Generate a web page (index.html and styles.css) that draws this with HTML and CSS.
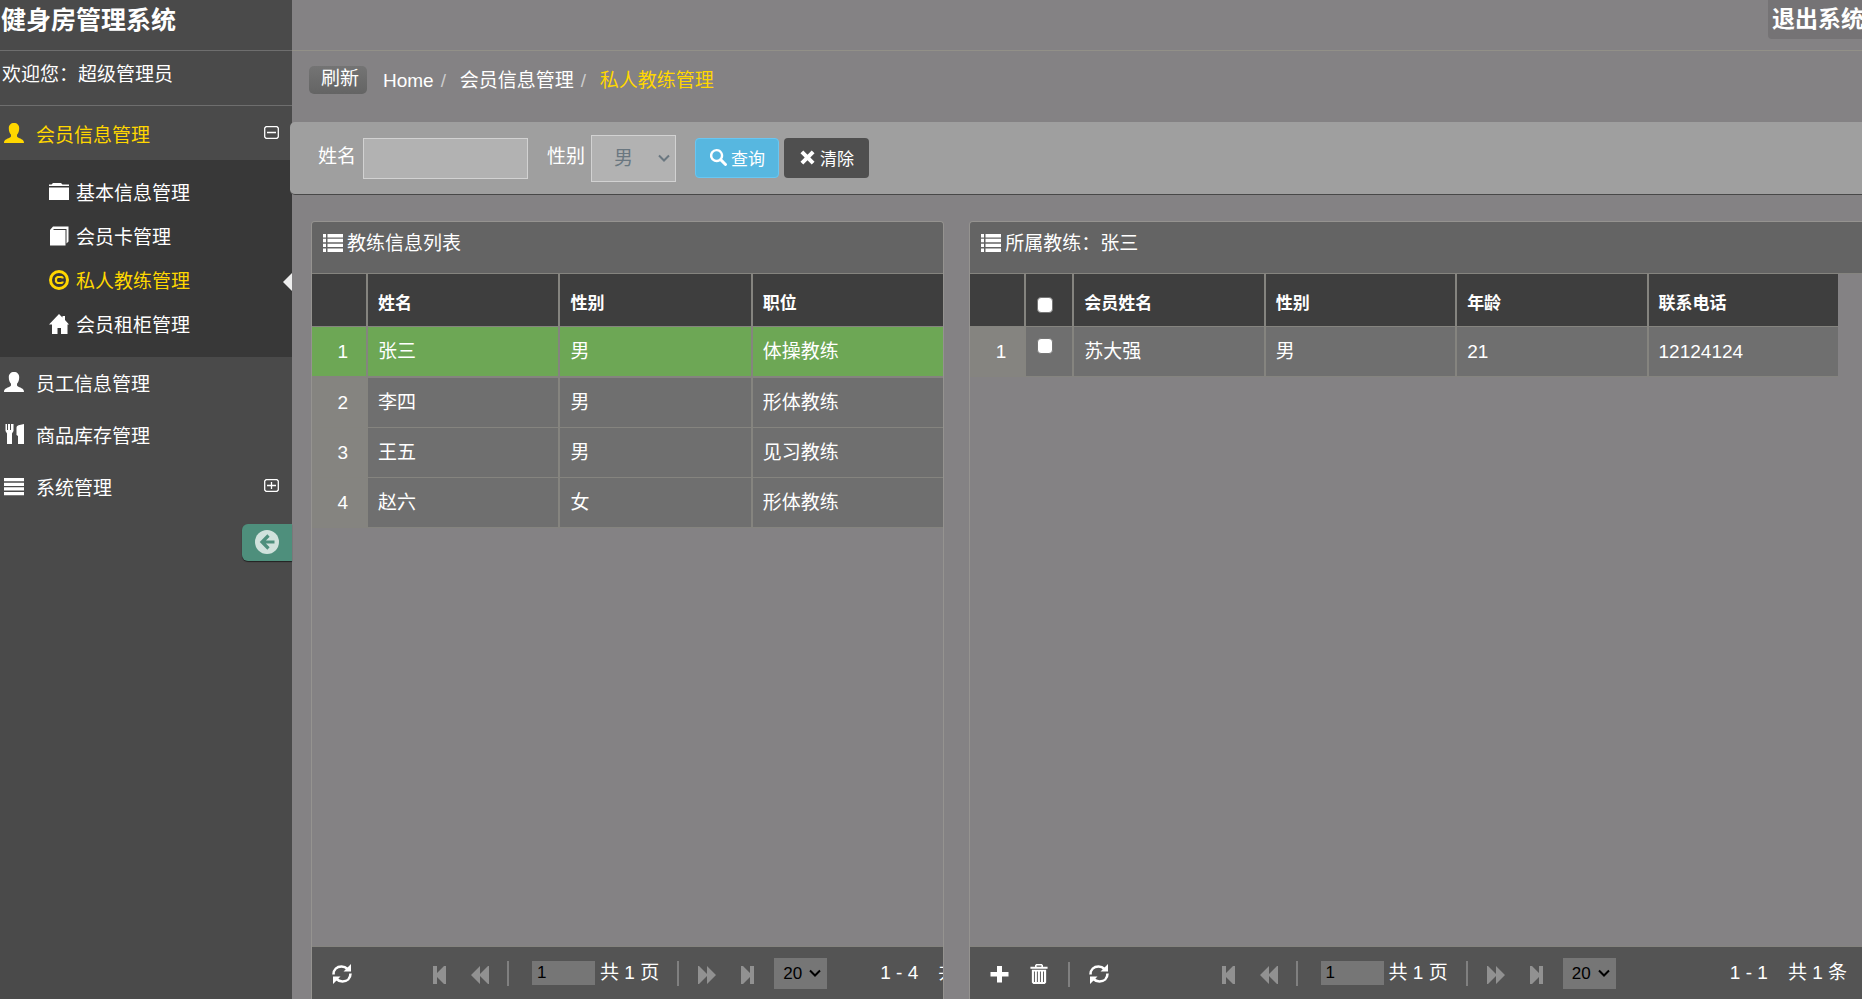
FILE: index.html
```html
<!DOCTYPE html>
<html lang="zh-CN">
<head>
  <meta charset="UTF-8">
  <meta name="viewport" content="width=device-width, initial-scale=1.0">
  <title>健身房管理系统</title>
  <link rel="stylesheet" href="styles.css">
</head>
<body>
  <svg class="sprite" aria-hidden="true">
    <symbol id="i-user" viewBox="0 0 20 20"><path d="M10 0c3.200 0 5.200 2 5.200 5.200 0 2.600-.8 5-2.200 6.500v1.600c0 .9 1 1.400 2.500 2 2.300 1 4.500 1.700 4.500 4.700H0c0-3 2.200-3.700 4.500-4.700 1.500-.6 2.500-1.100 2.500-2v-1.600C5.600 10.200 4.800 7.800 4.800 5.200 4.800 2 6.800 0 10 0z"/></symbol>
    <symbol id="i-folder" viewBox="0 0 20 20"><path d="M0 4V2.500h2.500L4 1h8l1.500 1.500H20V4zM0 5.500h20V18H0z"/></symbol>
    <symbol id="i-book" viewBox="0 0 20 20"><path d="M1 4 4 .5h15.500v15l-2 2V3H5L4 4h12.500v15.500H1z"/></symbol>
    <symbol id="i-copy" viewBox="0 0 20 20"><path fill-rule="evenodd" d="M10 0a10 10 0 1 0 0 20 10 10 0 0 0 0-20zm0 3a7 7 0 1 1 0 14 7 7 0 0 1 0-14z"/><path fill="none" stroke="currentColor" stroke-width="2.200" d="M13.500 8.500V7.800L12.700 7H8.500L7 8.500v3L8.500 13h4.200l.8-.8v-.7"/></symbol>
    <symbol id="i-home" viewBox="0 0 20 20"><path d="M10 0l3.500 3.500V2H16v4l4 4.500h-1.500V20H12v-6H8.500v6H3v-9.500H0z"/></symbol>
    <symbol id="i-cutlery" viewBox="0 0 20 20"><path d="M1.500 0H3v6h1V0h2v6h1V0h2.500v7l-1.500 2.500V20H3V9.500L1.500 7zM20 0v20h-6v-8l-1.500-1V4c0-1.500.7-2.200 2-2.700z"/></symbol>
    <symbol id="i-bars" viewBox="0 0 20 20"><path d="M0 2h20v3.200H0zm0 4.700h20v3.200H0zm0 4.600h20v3.200H0zM0 16h20v3.200H0z"/></symbol>
    <symbol id="i-list" viewBox="0 0 20 18"><path d="M0 0h3v3.400H0zm4.500 0H20v3.400H4.500zM0 4.800h3v3.400H0zm4.500 0H20v3.400H4.500zM0 9.700h3V13H0zm4.500 0H20V13H4.500zM0 14.500h3V18H0zm4.500 0H20V18H4.500z"/></symbol>
    <symbol id="i-minus-box" viewBox="0 0 15 13"><path fill="none" stroke="currentColor" stroke-width="1.300" d="M2 .7h11l1.300 1.300v9L13 12.300H2L.7 11V2zM3 6.500h9"/></symbol>
    <symbol id="i-plus-box" viewBox="0 0 15 13"><path fill="none" stroke="currentColor" stroke-width="1.300" d="M2 .7h11l1.300 1.300v9L13 12.300H2L.7 11V2zM3 6.500h9M7.500 3v7"/></symbol>
    <symbol id="i-back" viewBox="0 0 24 24"><circle cx="12" cy="12" r="12"/><path fill="none" stroke="#4e8f7c" stroke-width="3.200" d="M13.500 5.500 7 12l6.500 6.500M7 12h12.500"/></symbol>
    <symbol id="i-search" viewBox="0 0 18 18"><path fill-rule="evenodd" d="M7 0a7 7 0 1 0 3.700 12.900l4.600 4.600a1.500 1.500 0 0 0 2.200-2.200l-4.600-4.600A7 7 0 0 0 7 0zm0 2.500a4.500 4.500 0 1 1 0 9 4.500 4.500 0 0 1 0-9z"/></symbol>
    <symbol id="i-times" viewBox="0 0 16 16"><path d="M3.500 0.500 8 5l4.500-4.500 3 3L11 8l4.500 4.500-3 3L8 11l-4.500 4.500-3-3L5 8 .5 3.500z"/></symbol>
    <symbol id="i-refresh" viewBox="0 0 20 20"><path fill="none" stroke="currentColor" stroke-width="2.600" d="M1.500 10.500C1.500 5.500 5 2.500 9.500 2.500c2.600 0 4.500 1 6 2.500M18.500 9.500c0 5-3.500 8-8 8-2.600 0-4.500-1-6-2.500"/><path d="M19 0v7.500h-7.500zM1 20v-7.500h7.500z"/></symbol>
    <symbol id="i-first" viewBox="0 0 14 18"><path d="M0 0h4v7l7-7h2v18h-2l-7-7v7H0z"/></symbol>
    <symbol id="i-prev" viewBox="0 0 18 18"><path d="M9 0v8l8-8h1v18h-1l-8-8v8L0 9z"/></symbol>
    <symbol id="i-next" viewBox="0 0 18 18"><path d="M9 0v8L1 0H0v18h1l8-8v8l9-9z"/></symbol>
    <symbol id="i-last" viewBox="0 0 14 18"><path d="M13 0H9v7L2 0H0v18h2l7-7v7h4z"/></symbol>
    <symbol id="i-add" viewBox="0 0 20 20"><path d="M7 2h5v6h6.500v4.500H12v6H7v-6H.500V8H7z"/></symbol>
    <symbol id="i-trash" viewBox="0 0 18 21"><path fill-rule="evenodd" d="M6 0h6l1.200 1.200V3H18v2H0V3h4.800V1.200zm.5 1.700V3h5V1.700zM1.500 6h15v13.500L15 21H3l-1.500-1.500zm2.200 2v11h1V8zm3.100 0v11h1V8zm3.200 0v11h1V8zm3.200 0v11h1V8z"/></symbol>
    <symbol id="i-down" viewBox="0 0 12 8"><path fill="none" stroke="currentColor" stroke-width="2" d="M1 1.500l5 5 5-5"/></symbol>
  </svg>

  <aside class="sidebar">
    <h1 class="brand">健身房管理系统</h1>
    <div class="welcome">欢迎您：超级管理员</div>
    <nav>
      <ul class="menu">
        <li class="menu-first">
          <a href="#" class="active"><svg class="icon"><use href="#i-user"/></svg><span>会员信息管理</span><svg class="expand"><use href="#i-minus-box"/></svg></a>
          <ul class="submenu">
            <li><a href="#"><svg class="icon"><use href="#i-folder"/></svg><span>基本信息管理</span></a></li>
            <li><a href="#"><svg class="icon"><use href="#i-book"/></svg><span>会员卡管理</span></a></li>
            <li class="current"><a href="#" class="active"><svg class="icon"><use href="#i-copy"/></svg><span>私人教练管理</span></a></li>
            <li><a href="#"><svg class="icon"><use href="#i-home"/></svg><span>会员租柜管理</span></a></li>
          </ul>
        </li>
        <li><a href="#"><svg class="icon"><use href="#i-user"/></svg><span>员工信息管理</span></a></li>
        <li><a href="#"><svg class="icon"><use href="#i-cutlery"/></svg><span>商品库存管理</span></a></li>
        <li><a href="#"><svg class="icon"><use href="#i-bars"/></svg><span>系统管理</span><svg class="expand"><use href="#i-plus-box"/></svg></a></li>
      </ul>
    </nav>
    <button class="collapse" type="button" aria-label="收起菜单"><svg><use href="#i-back"/></svg></button>
  </aside>

  <main class="main">
    <header class="topbar">
      <button class="logout" type="button">退出系统</button>
    </header>

    <div class="crumbs">
      <button class="reload" type="button">刷新</button>
      <a href="#">Home</a><span class="slash">/</span>
      <a href="#">会员信息管理</a><span class="slash">/</span>
      <a href="#" class="active">私人教练管理</a>
    </div>

    <form class="search">
      <label for="name">姓名</label>
      <input type="text" id="name">
      <label for="sex">性别</label>
      <div class="select sex">
        <select id="sex">
          <option>男</option>
          <option>女</option>
        </select>
        <svg><use href="#i-down"/></svg>
      </div>
      <button class="btn btn-info" type="button"><svg><use href="#i-search"/></svg>查询</button>
      <button class="btn btn-inverse" type="button"><svg><use href="#i-times"/></svg>清除</button>
    </form>

    <div class="panels">
      <section class="panel">
        <h2 class="panel-title"><svg><use href="#i-list"/></svg>教练信息列表</h2>
        <div class="panel-body">
          <table class="grid">
            <colgroup><col class="col-num"><col><col><col></colgroup>
            <thead>
              <tr><th></th><th>姓名</th><th>性别</th><th>职位</th></tr>
            </thead>
            <tbody>
              <tr class="selected"><td class="num">1</td><td>张三</td><td>男</td><td>体操教练</td></tr>
              <tr><td class="num">2</td><td>李四</td><td>男</td><td>形体教练</td></tr>
              <tr><td class="num">3</td><td>王五</td><td>男</td><td>见习教练</td></tr>
              <tr><td class="num">4</td><td>赵六</td><td>女</td><td>形体教练</td></tr>
            </tbody>
          </table>
        </div>
        <footer class="pager">
          <div class="tools">
            <button type="button" aria-label="刷新"><svg class="tool"><use href="#i-refresh"/></svg></button>
          </div>
          <div class="pages">
            <button type="button" aria-label="首页" disabled><svg class="edge"><use href="#i-first"/></svg></button>
            <button type="button" aria-label="上一页" disabled><svg class="step"><use href="#i-prev"/></svg></button>
            <span class="sep"></span>
            <label class="page-no"><input type="text" value="1"> 共 1 页</label>
            <span class="sep"></span>
            <button type="button" aria-label="下一页" disabled><svg class="step"><use href="#i-next"/></svg></button>
            <button type="button" aria-label="末页" disabled><svg class="edge"><use href="#i-last"/></svg></button>
            <div class="select page-size">
              <select aria-label="每页条数"><option>20</option><option>50</option></select>
              <svg><use href="#i-down"/></svg>
            </div>
          </div>
          <div class="info"><span>1 - 4</span><span>共 4 条</span></div>
        </footer>
      </section>

      <section class="panel panel-open">
        <h2 class="panel-title"><svg><use href="#i-list"/></svg>所属教练：张三</h2>
        <div class="panel-body">
          <table class="grid">
            <colgroup><col class="col-num"><col class="col-check"><col><col><col><col></colgroup>
            <thead>
              <tr><th></th><th class="check"><input type="checkbox" aria-label="全选"></th><th>会员姓名</th><th>性别</th><th>年龄</th><th>联系电话</th></tr>
            </thead>
            <tbody>
              <tr><td class="num">1</td><td class="check"><input type="checkbox" aria-label="选择苏大强"></td><td>苏大强</td><td>男</td><td>21</td><td>12124124</td></tr>
            </tbody>
          </table>
        </div>
        <footer class="pager">
          <div class="tools">
            <button type="button" aria-label="添加"><svg class="tool"><use href="#i-add"/></svg></button>
            <button type="button" aria-label="删除"><svg class="tool"><use href="#i-trash"/></svg></button>
            <span class="sep"></span>
            <button type="button" aria-label="刷新"><svg class="tool"><use href="#i-refresh"/></svg></button>
          </div>
          <div class="pages">
            <button type="button" aria-label="首页" disabled><svg class="edge"><use href="#i-first"/></svg></button>
            <button type="button" aria-label="上一页" disabled><svg class="step"><use href="#i-prev"/></svg></button>
            <span class="sep"></span>
            <label class="page-no"><input type="text" value="1"> 共 1 页</label>
            <span class="sep"></span>
            <button type="button" aria-label="下一页" disabled><svg class="step"><use href="#i-next"/></svg></button>
            <button type="button" aria-label="末页" disabled><svg class="edge"><use href="#i-last"/></svg></button>
            <div class="select page-size">
              <select aria-label="每页条数"><option>20</option><option>50</option></select>
              <svg><use href="#i-down"/></svg>
            </div>
          </div>
          <div class="info"><span>1 - 1</span><span>共 1 条</span></div>
        </footer>
      </section>
    </div>
  </main>
</body>
</html>
```
FILE: styles.css
```css
* {
  box-sizing: border-box;
}

body {
  margin: 0;
  display: flex;
  min-height: 100vh;
  overflow-x: hidden;
  background: #848284;
  color: #fff;
  font-family: "Liberation Sans", "Noto Sans CJK SC", sans-serif;
  font-size: 19px;
  line-height: 28px;
}

a {
  color: #fff;
  text-decoration: none;
}

a.active {
  color: #ffd700;
}

button,
input,
select {
  margin: 0;
  font-family: inherit;
  border-radius: 0;
}

button {
  border: 0;
  background: none;
  color: #fff;
}

svg {
  display: block;
  flex: none;
  fill: currentColor;
}

.sprite {
  display: none;
}

/* sidebar */

.sidebar {
  flex: 0 0 292px;
  background: #4a4a4a;
}

.brand {
  margin: 0;
  height: 51px;
  padding: 4px 1px 0;
  border-bottom: 1px solid #6e6e6e;
  font-size: 25px;
  line-height: 32px;
}

.welcome {
  height: 55px;
  padding: 10px 2px 0;
  border-bottom: 1px solid #6e6e6e;
}

.menu,
.submenu {
  margin: 0;
  padding: 0;
  list-style: none;
}

.menu a {
  display: flex;
  align-items: center;
  gap: 12px;
  height: 52px;
  padding: 3px 13px 0 4px;
}

.menu .menu-first > a {
  height: 54px;
  padding-top: 5px;
}

.submenu {
  padding: 11px 0 10px;
  background: #383838;
}

.submenu li {
  position: relative;
}

.menu .submenu a {
  gap: 7px;
  height: 44px;
  padding-top: 2px;
  padding-left: 49px;
}

.icon {
  width: 20px;
  height: 20px;
  margin-bottom: 5px;
}

.expand {
  width: 15px;
  height: 13px;
  margin: 0 0 6px auto;
  color: #fff;
}

.current::after {
  content: "";
  position: absolute;
  right: 0;
  top: 14px;
  border: 9px solid transparent;
  border-left: 0;
  border-right-color: #eee;
}

.collapse {
  display: block;
  width: 50px;
  height: 37px;
  margin: 11px 0 0 auto;
  padding: 0 0 2px 13px;
  border-radius: 6px 0 0 6px;
  background: #4e8f7c;
  box-shadow: 0 1px 1px #222;
  color: #d0e2dc;
}

.collapse svg {
  width: 24px;
  height: 24px;
}

/* main area */

.main {
  flex: 1;
  min-width: 0;
  display: flex;
  flex-direction: column;
}

.topbar {
  display: flex;
  justify-content: flex-end;
  align-items: flex-start;
  height: 51px;
  overflow: hidden;
  border-bottom: 1px solid #929088;
}

.logout {
  flex: none;
  height: 39px;
  margin-right: -6px;
  padding: 0 4px 5px;
  border-radius: 0 0 4px 4px;
  background: #757375;
  font-size: 23px;
  font-weight: bold;
  white-space: nowrap;
}

.crumbs {
  display: flex;
  align-items: center;
  height: 71px;
  padding: 0 17px 13px;
}

.crumbs a {
  padding-top: 2px;
}

.reload {
  width: 58px;
  height: 28px;
  margin-right: 16px;
  padding: 0 0 2px 4px;
  border-radius: 5px;
  background: linear-gradient(#747474, #646464);
  font-size: 19px;
  line-height: 26px;
}

.slash {
  width: 26px;
  padding: 2px 0 0 7px;
  color: #ccc;
}

.search {
  display: flex;
  align-items: center;
  height: 73px;
  margin-left: -2px;
  padding-left: 28px;
  border-bottom: 1px solid #484848;
  border-radius: 5px 0 0 5px;
  background: #9f9f9f;
}

.search label {
  padding-bottom: 2px;
}

.search input {
  width: 165px;
  height: 41px;
  margin: 0 19px 0 7px;
  border: 1px solid #d2d2d2;
  background: #b2b2b2;
  font-size: 17px;
}

.select {
  position: relative;
}

.select select {
  appearance: none;
  display: block;
  width: 100%;
  height: 100%;
}

.select svg {
  position: absolute;
  top: 50%;
  right: 6px;
  width: 12px;
  height: 8px;
  margin-top: -4px;
  pointer-events: none;
}

.sex {
  width: 85px;
  height: 47px;
  margin: 0 19px 0 6px;
  color: #6a7780;
}

.sex select {
  padding: 0 0 0 22px;
  border: 1px solid #d2d2d2;
  background: #b2b2b2;
  color: inherit;
  font-size: 19px;
}

.btn {
  display: flex;
  align-items: center;
  gap: 4px;
  width: 84px;
  height: 40px;
  padding: 0 14px 2px;
  border-radius: 4px;
  font-size: 17px;
  white-space: nowrap;
}

.btn svg {
  width: 17px;
  height: 17px;
}

.btn-info {
  border: 1px solid #68c6f2;
  background: #57b7e0;
  margin-right: 5px;
}

.btn-inverse {
  width: 85px;
  gap: 5px;
  padding: 0 16px 2px;
  background: #4f4f4f;
}

.btn-inverse svg {
  width: 15px;
  height: 15px;
}

/* panels */

.panels {
  flex: 1;
  display: grid;
  grid-template-columns: minmax(0, 83fr) minmax(0, 117fr);
  gap: 25px;
  padding: 26px 0 0 19px;
}

.panel {
  display: flex;
  flex-direction: column;
  border: 1px solid #959390;
  border-bottom: 0;
  border-radius: 4px 4px 0 0;
  overflow: hidden;
}

.panel-open {
  border-right: 0;
  border-radius: 4px 0 0 0;
}

.panel-open .panel-body {
  padding-right: 24px;
}

.panel-title {
  display: flex;
  align-items: flex-start;
  gap: 4px;
  height: 52px;
  margin: 0;
  padding: 8px 11px;
  border-bottom: 1px solid #85847f;
  background: #646464;
  font-size: 19px;
  font-weight: normal;
}

.panel-title svg {
  width: 20px;
  height: 18px;
  margin-top: 4px;
}

.panel-body {
  flex: 1;
}

.grid {
  width: 100%;
  table-layout: fixed;
  border-collapse: separate;
  border-spacing: 0;
}

.col-num {
  width: 54px;
}

.col-check {
  width: 48px;
}

.grid th,
.grid td {
  padding: 0 0 0 10px;
  border-left: 2px solid #85847f;
  border-bottom: 1px solid #85847f;
  text-align: left;
  white-space: nowrap;
}

.grid th {
  height: 53px;
  padding-top: 8px;
  background: #3e3e3e;
  font-size: 17px;
}

.grid td {
  height: 50px;
  background: #6f6f6f;
}

.grid th:first-child,
.grid td:first-child {
  border-left: 0;
}

.grid .num {
  padding: 0 18px 0 0;
  background: #858480;
  text-align: right;
}

.grid .selected td {
  height: 51px;
  border-bottom-width: 2px;
  background: #6da755;
}

.grid .check {
  vertical-align: top;
  padding: 0 0 0 11px;
}

.grid input {
  appearance: none;
  display: block;
  width: 16px;
  height: 16px;
  margin-top: 11px;
  border: 1px solid #777;
  border-radius: 4px;
  background: #fff;
}

.grid th input {
  margin-top: 23px;
}

/* pager */

.pager {
  display: grid;
  grid-template-columns: minmax(0, 1fr) auto minmax(0, 1fr);
  align-items: center;
  height: 53px;
  padding-left: 5px;
  border-top: 1px solid #85847f;
  background: #545454;
}

.pager button {
  padding: 0;
}

.tools {
  display: flex;
  align-items: center;
  gap: 19px;
  padding: 2px 0 0 15px;
}

.tool {
  width: 20px;
  height: 20px;
}

.pages {
  display: flex;
  align-items: center;
}

.pages button {
  padding-top: 3px;
  color: #919191;
}

.edge {
  width: 14px;
  height: 18px;
}

.step {
  width: 18px;
  height: 18px;
  margin-left: 24px;
}

.sep {
  width: 2px;
  height: 25px;
  background: #808080;
}

.pages .sep {
  margin-left: 18px;
}

.page-no {
  display: flex;
  align-items: center;
  gap: 5px;
  margin-left: 23px;
  white-space: nowrap;
}

.page-no input {
  width: 63px;
  height: 24px;
  padding: 0 5px;
  border: 0;
  background: #767676;
  color: #000;
  font-size: 17px;
}

.pages .sep ~ button + button {
  margin-left: 25px;
}

.pages .sep ~ button .step {
  margin-left: 19px;
}

.page-size {
  width: 53px;
  height: 31px;
  margin-left: 19px;
  color: #000;
}

.page-size select {
  padding: 0 0 0 9px;
  border: 0;
  background: #767676;
  color: inherit;
  font-size: 17px;
}

/* starts after the page size box and may run out of a narrow panel */
.info {
  display: flex;
  gap: 20px;
  padding: 0 15px 0 53px;
  white-space: nowrap;
}

.info span {
  flex: none;
}

.info span:first-child {
  margin-left: auto;
}
```
